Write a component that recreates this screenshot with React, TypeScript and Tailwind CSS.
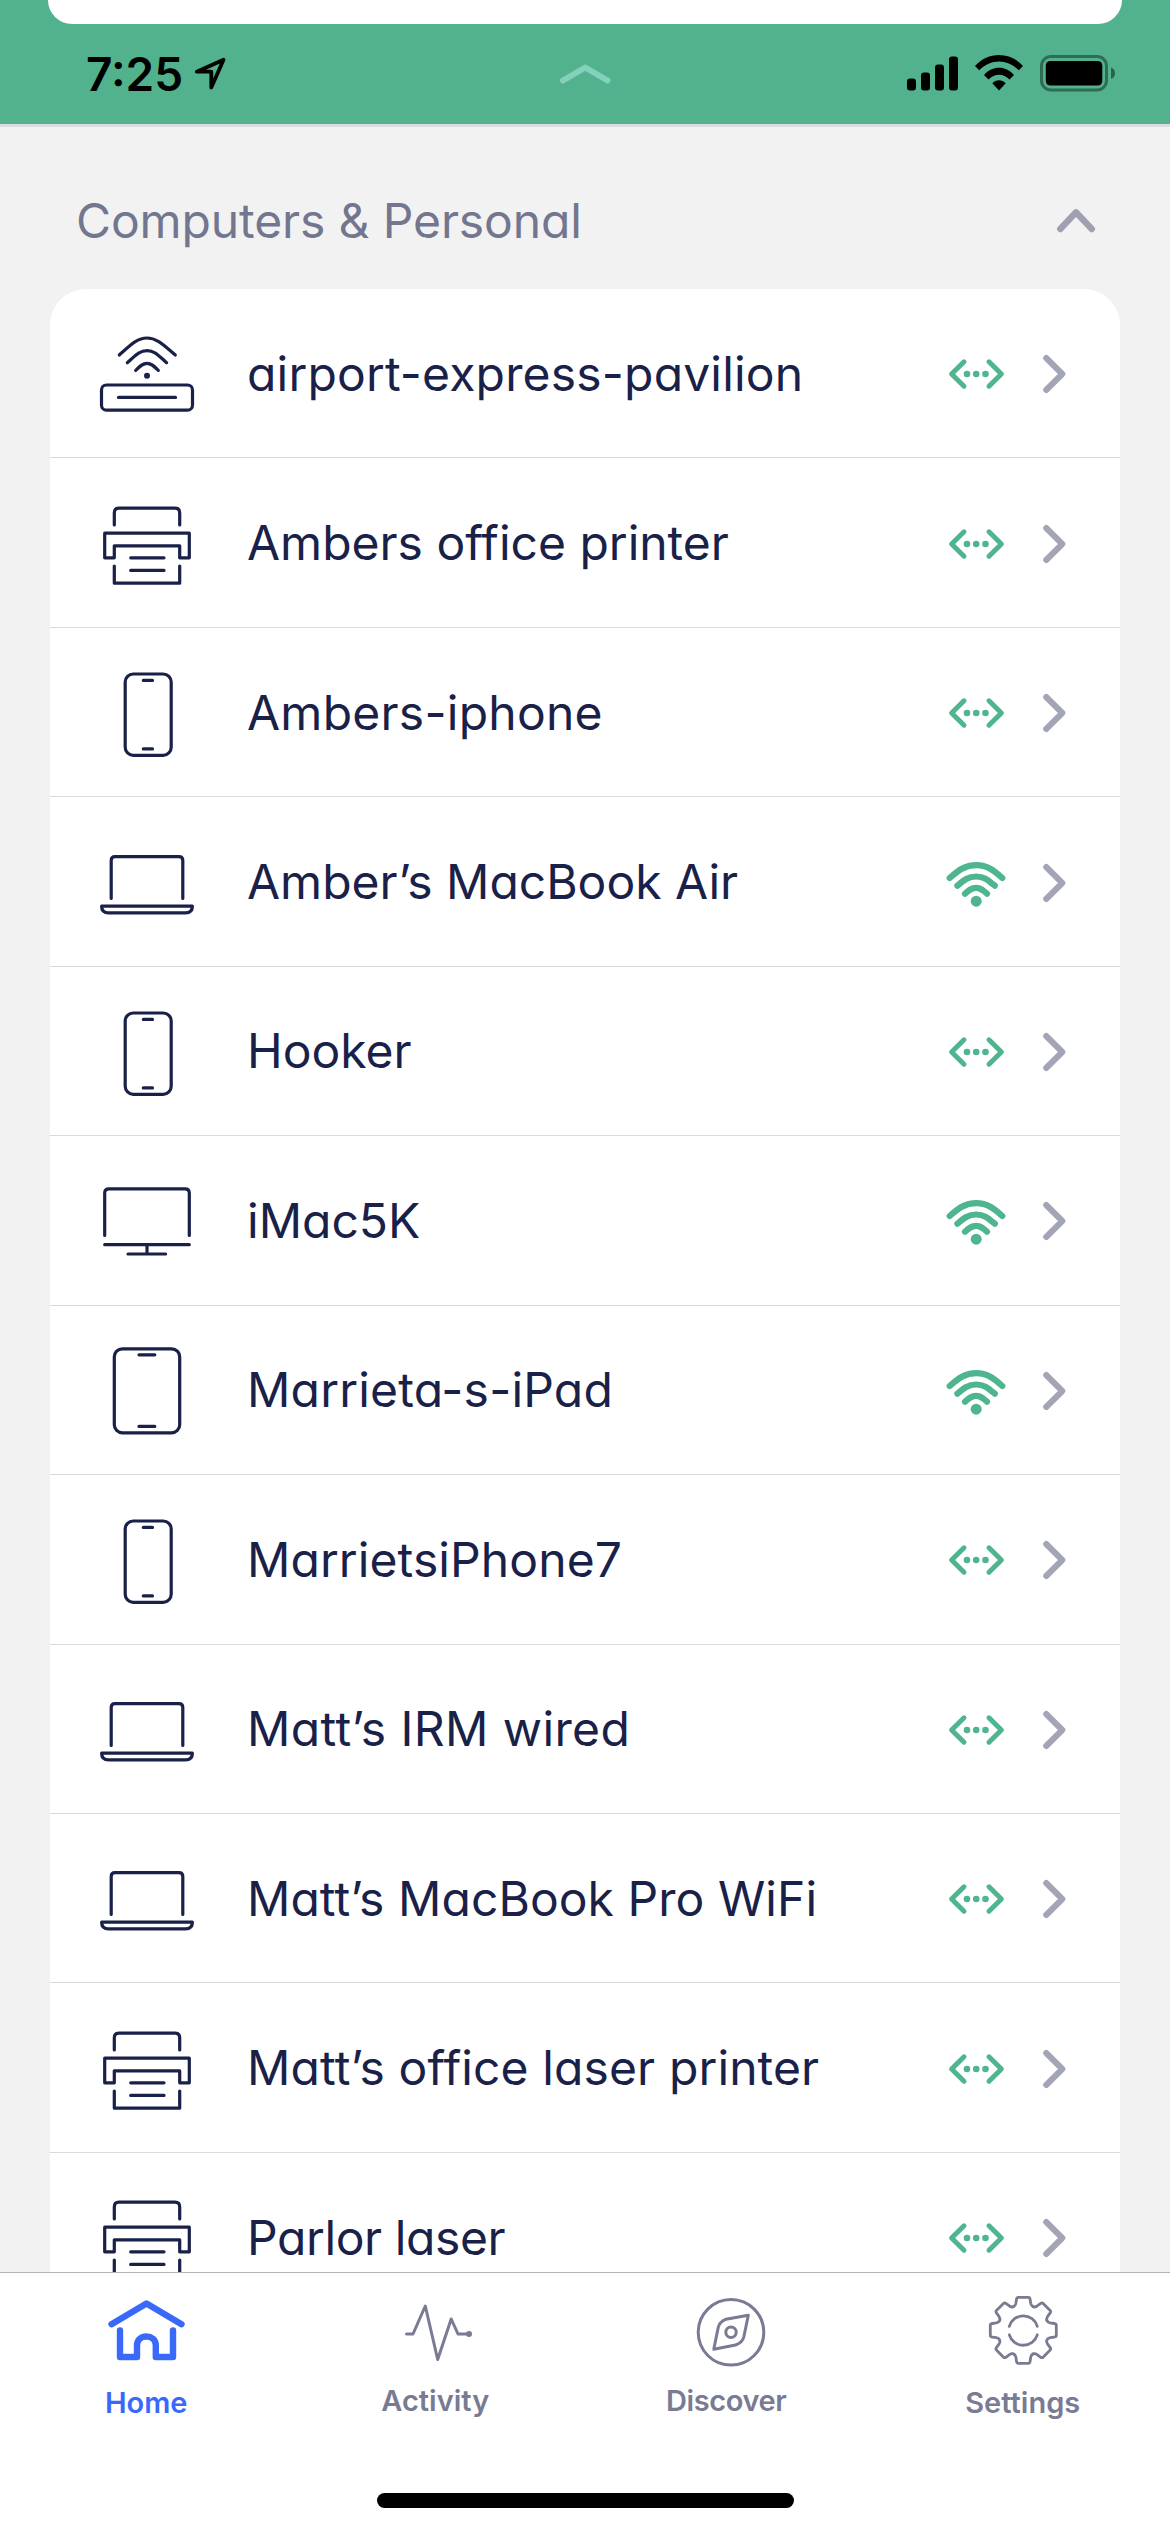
import { useState } from 'react';

type DeviceType = 'router' | 'printer' | 'phone' | 'laptop' | 'desktop' | 'tablet';

type Device = {
    name: string;
    type: DeviceType;
    connection: 'wired' | 'wifi';
    tracking: string;
};

const devices: Device[] = [
    { name: 'airport-express-pavilion', type: 'router', connection: 'wired', tracking: 'tracking-[0.18px]' },
    { name: 'Ambers office printer', type: 'printer', connection: 'wired', tracking: 'tracking-normal' },
    { name: 'Ambers-iphone', type: 'phone', connection: 'wired', tracking: 'tracking-[0.25px]' },
    { name: 'Amber’s MacBook Air', type: 'laptop', connection: 'wifi', tracking: 'tracking-normal' },
    { name: 'Hooker', type: 'phone', connection: 'wired', tracking: 'tracking-normal' },
    { name: 'iMac5K', type: 'desktop', connection: 'wifi', tracking: 'tracking-normal' },
    { name: 'Marrieta-s-iPad', type: 'tablet', connection: 'wifi', tracking: 'tracking-[0.2px]' },
    { name: 'MarrietsiPhone7', type: 'phone', connection: 'wired', tracking: 'tracking-[0.1px]' },
    { name: 'Matt’s IRM wired', type: 'laptop', connection: 'wired', tracking: 'tracking-[0.4px]' },
    { name: 'Matt’s MacBook Pro WiFi', type: 'laptop', connection: 'wired', tracking: 'tracking-[0.06px]' },
    { name: 'Matt’s office laser printer', type: 'printer', connection: 'wired', tracking: 'tracking-[0.12px]' },
    { name: 'Parlor laser', type: 'printer', connection: 'wired', tracking: 'tracking-[-0.4px]' },
];

const DeviceIcon = ({ type }: { type: DeviceType }) => (
    <svg
        viewBox="0 0 96 96"
        className="w-24 h-24 shrink-0"
        fill="none"
        stroke="#1a2149"
        strokeWidth="3.2"
        strokeLinecap="round"
        strokeLinejoin="round"
    >
        {type === 'router' && (
            <>
                <path d="M20.3 30C31 20.5 38 13 48 13S65 20.5 76.3 30" />
                <path d="M28.3 37.7C36 31 40 25.7 48 25.7S60 31 67.6 37.7" />
                <path d="M36.7 45.3C41 41 43.5 38.3 48 38.3S55 41 59.3 45.3" />
                <circle cx="48" cy="50.7" r="3" fill="#1a2149" stroke="none" />
                <rect x="2.5" y="60" width="91" height="25.2" rx="5" />
                <path d="M19.5 72.4H76.5" />
            </>
        )}
        {type === 'printer' && (
            <>
                <path d="M15.3 30V18Q15.3 13.2 20 13.2H76Q80.7 13.2 80.7 18V30" />
                <path d="M15.3 62.8H5.7V38.2H90.3V62.8H80.7V50.8H15.3Z" />
                <path d="M31.7 62.8H65M31.7 75.4H65" />
                <path d="M15.3 71V88.2H80.7V71" />
            </>
        )}
        {type === 'phone' && (
            <>
                <rect x="26.2" y="10" width="46" height="81.3" rx="8" />
                <path d="M44.3 16.4H53.5M44.3 84.9H53.5" />
            </>
        )}
        {type === 'laptop' && (
            <>
                <path d="M12.2 64.5V26.5Q12.2 22.6 16 22.6H80Q83.8 22.6 83.8 26.5V64.5" />
                <path d="M2.6 72.2H93.4Q93.4 78.9 86.5 78.9H9.5Q2.6 78.9 2.6 72.2Z" />
            </>
        )}
        {type === 'desktop' && (
            <>
                <path d="M5.7 63.5V21Q5.7 16.8 10 16.8H86Q90.3 16.8 90.3 21V63.5" />
                <path d="M5.7 72.7H90.3M48 72.7V82M29 82H66.6" />
            </>
        )}
        {type === 'tablet' && (
            <>
                <rect x="15.3" y="6.8" width="65.4" height="84" rx="8" />
                <path d="M40 12.8H55.8M40 84.4H55.8" />
            </>
        )}
    </svg>
);

const ConnectionIcon = ({ connection }: { connection: Device['connection'] }) => (
    <svg
        viewBox="0 0 60 60"
        className="w-[60px] h-[60px] mt-[2px] shrink-0"
        fill="none"
        stroke="#4fb58f"
        strokeLinecap="round"
        strokeLinejoin="round"
    >
        {connection === 'wired' ? (
            <>
                <path d="M18 17.8L5.6 30L18 42.2M43 17.8L55.4 30L43 42.2" strokeWidth="5" />
                <g fill="#4fb58f" stroke="none">
                    <circle cx="21" cy="30" r="3.3" />
                    <circle cx="30.2" cy="30" r="3.3" />
                    <circle cx="39.5" cy="30" r="3.3" />
                </g>
            </>
        ) : (
            <>
                <path
                    d="M3.7 25C12 17.700 19 12.100 30.2 12.100S48 17.700 56.3 25M11.4 32.700C18 27 22 23.500 30.2 23.500S42 27 48.8 32.700M19 40.700C23 37 25.5 34.900 30.2 34.900S37 37 41 40.700"
                    strokeWidth="6.2"
                />
                <circle cx="30.2" cy="48.2" r="5.5" fill="#4fb58f" stroke="none" />
            </>
        )}
    </svg>
);

const HomeIcon = () => (
    <svg viewBox="0 0 80 80" className="w-20 h-20" fill="none" stroke="#3a69f9" strokeWidth="6.4" strokeLinecap="round" strokeLinejoin="round">
        <path d="M5.5 32.2L40.5 11.5L75.5 32.2" />
        <path d="M14 38.5V65H31V53.5C31 41.5 49.8 41.5 49.8 53.5V65H67V38.5" />
    </svg>
);

const ActivityIcon = () => (
    <svg viewBox="0 0 80 80" className="w-20 h-20" fill="none" stroke="#787b93" strokeWidth="3" strokeLinecap="round" strokeLinejoin="round">
        <path d="M7.5 42H14L26.3 14L38.7 67.5L52.2 27L59 42H70" />
        <circle cx="70" cy="42" r="3" fill="#787b93" stroke="none" />
    </svg>
);

const DiscoverIcon = () => (
    <svg viewBox="0 0 80 80" className="w-20 h-20" fill="none" stroke="#787b93" strokeWidth="3" strokeLinejoin="round">
        <circle cx="40" cy="40.3" r="32.8" />
        <path d="M57.3 23.3L35 27.2Q28.5 30 27.2 35.5L22.8 57.3L44.5 53Q51.5 50.5 52.8 45Z" />
        <circle cx="40" cy="40.3" r="5.2" />
    </svg>
);

const SettingsIcon = () => (
    <svg viewBox="0 0 80 80" className="w-20 h-20" fill="none" stroke="#787b93" strokeWidth="2.8" strokeLinecap="round" strokeLinejoin="round">
        <g transform="translate(39.3 38.3)">
            {[0, 45, 90, 135, 180, 225, 270, 315].map((angle) => (
                <path
                    key={angle}
                    transform={`rotate(${angle})`}
                    d="M-9.8 -23.6Q-8 -24.2 -7.4 -27L-6.8 -31Q-6.5 -33 -5 -33H5Q6.5 -33 6.8 -31L7.4 -27Q8 -24.2 9.8 -23.6"
                />
            ))}
            <path d="M-14 -4A14.6 14.6 0 0 1 14 -4M-14 4.5A14.6 14.6 0 0 0 14 4.5" />
        </g>
    </svg>
);

const tabs = [
    { label: 'Home', icon: <HomeIcon />, color: 'text-[#3a69f9]', labelClass: 'mt-[32px]' },
    { label: 'Activity', icon: <ActivityIcon />, color: 'text-[#787b93]', labelClass: 'mt-[30px] mr-[7px]' },
    { label: 'Discover', icon: <DiscoverIcon />, color: 'text-[#787b93]', labelClass: 'mt-[30px] mr-[10px] tracking-[-0.4px]' },
    { label: 'Settings', icon: <SettingsIcon />, color: 'text-[#787b93]', labelClass: 'mt-[32px] mr-[2px]' },
];

const StatusBar = () => (
    <header className="h-[127px] shrink-0 bg-[#51b28d] border-b-3 border-[#dcdbe0]">
        <div className="h-6 mx-12 bg-white rounded-b-[32px]" />
        <div className="grid grid-cols-3 items-center h-[100px]">
            <div className="flex items-center pl-[86px]">
                <span className="w-[106px] text-[46px] leading-none font-semibold text-black">7:25</span>
                <svg viewBox="0 0 36 36" className="w-9 h-9" fill="none" stroke="black" strokeWidth="3.8" strokeLinejoin="round">
                    <path d="M31.5 3.7L4.8 15.7H19.3V31.6Z" />
                </svg>
            </div>
            <svg viewBox="0 0 60 30" className="w-[60px] h-[30px] justify-self-center" fill="none" stroke="#83d0bb" strokeWidth="6" strokeLinecap="round" strokeLinejoin="round">
                <path d="M8 21.5L30.3 8.5L52.5 21.5" />
            </svg>
            <svg viewBox="0 0 220 50" className="w-[220px] h-[50px] justify-self-end mr-[50px]">
                <rect x="7" y="29.5" width="9" height="12" rx="3" />
                <rect x="21" y="23.5" width="9" height="18" rx="3" />
                <rect x="35" y="15.5" width="9" height="26" rx="3" />
                <rect x="49" y="7.5" width="9" height="34" rx="3" />
                <path d="M75 17C88 2.2 110 2.2 123 17L118.8 21.3C107.5 9.5 90.5 9.5 79.2 21.3Z" />
                <path d="M84 26C92.5 16.3 105.5 16.3 114 26L109.5 30.5C103.5 24 94.5 24 88.5 30.5Z" />
                <path d="M92.3 34.3C96 30.2 102 30.2 105.7 34.3L99 41.5Z" />
                <rect x="141.5" y="7.5" width="65" height="33.5" rx="9.5" fill="none" stroke="black" strokeOpacity="0.4" strokeWidth="3" />
                <rect x="145.8" y="12" width="56.5" height="24.5" rx="4.5" />
                <path d="M211 18.5Q215 20 215 24.3T211 30Z" fillOpacity="0.45" />
            </svg>
        </div>
    </header>
);

const App = () => {
    const [open, setOpen] = useState(true);

    return (
        <div className="flex flex-col w-[1170px] h-[2532px] overflow-hidden bg-[#f2f2f2] font-['Inter',sans-serif] [font-feature-settings:'cv11']">
            <StatusBar />

            <main className="flex-1 min-h-0 overflow-hidden px-[50px]">
                {/* Section header */}
                <button
                    type="button"
                    onClick={() => setOpen(!open)}
                    className="flex items-center justify-between w-full h-[162px] pt-[26px] pl-[26px] pr-[14px]"
                >
                    <span className="text-[48px] leading-none text-[#72768f] tracking-[-0.12px]">Computers &amp; Personal</span>
                    <svg viewBox="0 0 60 40" className="w-[60px] h-10" fill="none" stroke="#9fa1b2" strokeWidth="6.4" strokeLinecap="round" strokeLinejoin="round">
                        <path d="M14.3 28L30 11.3L45.8 28" />
                    </svg>
                </button>

                {/* Device list */}
                {open && (
                    <ul className="bg-white rounded-t-[36px]">
                        {devices.map((device) => (
                            <li key={device.name} className="flex items-center h-[169.45px] pl-[49px] pr-[47px] border-b border-[#d9dade]">
                                <DeviceIcon type={device.type} />
                                <span className={`flex-1 ml-[52px] mt-px text-[48px] leading-none text-[#1a2149] whitespace-nowrap ${device.tracking}`}>
                                    {device.name}
                                </span>
                                <ConnectionIcon connection={device.connection} />
                                <svg viewBox="0 0 30 60" className="w-[30px] h-[60px] ml-[37px] mt-[2px] shrink-0" fill="none" stroke="#a3a5b7" strokeWidth="6" strokeLinecap="round" strokeLinejoin="round">
                                    <path d="M3.2 14L19.3 30L3.2 46" />
                                </svg>
                            </li>
                        ))}
                    </ul>
                )}
            </main>

            {/* Bottom navigation */}
            <footer className="flex flex-col h-[260px] shrink-0 bg-white border-t border-[#b4b4b4]">
                <nav className="grid grid-cols-4 h-[220px] pt-[19px]">
                    {tabs.map((tab) => (
                        <button type="button" key={tab.label} className={`flex flex-col items-center ${tab.color}`}>
                            {tab.icon}
                            <span className={`text-[29px] leading-none font-semibold -translate-y-4 ${tab.labelClass}`}>{tab.label}</span>
                        </button>
                    ))}
                </nav>
                <div className="w-[417px] h-[15px] mx-auto rounded-full bg-black" />
            </footer>
        </div>
    );
};

export default App;
